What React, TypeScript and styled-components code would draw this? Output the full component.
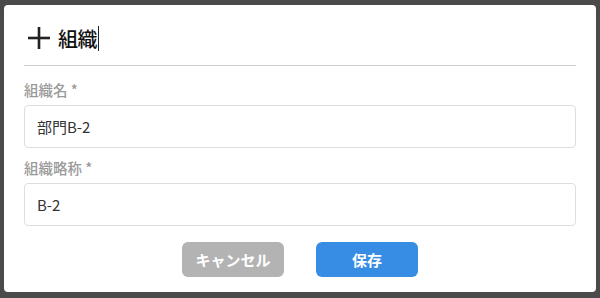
import styled, {createGlobalStyle} from 'styled-components'

const GlobalStyle = createGlobalStyle`
  html, body {
    margin: 0;
    padding: 0;
    background: #4a4a4a;
  }
  body {
    font-family: 'Noto Sans CJK JP', 'Noto Sans', sans-serif;
  }
`

const Overlay = styled.div`
  width: 600px;
  height: 298px;
  padding: 5px 4px 6px 4px;
  box-sizing: border-box;
  background: #4a4a4a;
`

const Dialog = styled.div`
  display: flex;
  flex-direction: column;
  height: 287px;
  padding: 16px 20px 0 20px;
  box-sizing: border-box;
  background: #fff;
  border-radius: 4px;
`

const Header = styled.div`
  display: flex;
  align-items: center;
  gap: 8px;
  height: 45px;
  padding: 0 0 10px 4px;
  border-bottom: 1px solid #cfcfcf;
  box-sizing: border-box;
`

const Title = styled.span`
  display: flex;
  align-items: center;
  font-size: 20px;
  font-weight: 500;
  color: #111;
  letter-spacing: -0.5px;
`

const Caret = styled.span`
  display: inline-block;
  width: 1px;
  height: 25px;
  margin-left: 1px;
  background: #222;
`

const Field = styled.div<{$top: number}>`
  display: flex;
  flex-direction: column;
  margin-top: ${(p) => p.$top}px;
`

const Label = styled.label`
  font-size: 14.5px;
  font-weight: 500;
  color: #9a9a9a;
  line-height: 18px;
  margin-bottom: 6px;
`

const Input = styled.div`
  display: flex;
  align-items: center;
  height: 43px;
  padding: 0 12px;
  box-sizing: border-box;
  border: 1px solid #dedede;
  border-radius: 4px;
  font-size: 15px;
  color: #333;
`

const Actions = styled.div`
  display: flex;
  justify-content: center;
  gap: 32px;
  margin-top: 16px;
`

const Button = styled.button<{$primary?: boolean}>`
  width: 102px;
  height: 35px;
  border: none;
  border-radius: 6px;
  font-family: 'Noto Sans CJK JP', 'Noto Sans', sans-serif;
  font-size: 15px;
  font-weight: 700;
  color: #fff;
  background: ${(p) => (p.$primary ? '#368de3' : '#b3b3b3')};
  cursor: pointer;
`

const PlusIcon = () => (
  <svg width="22" height="22" viewBox="0 0 22 22">
    <rect x="9.7" y="0" width="2.6" height="22" fill="#222" />
    <rect x="0" y="9.7" width="22" height="2.6" fill="#222" />
  </svg>
)

const App = () => {
  return (
    <>
      <GlobalStyle />
      <Overlay>
        <Dialog>
          <Header>
            <PlusIcon />
            <Title>
              組織
              <Caret />
            </Title>
          </Header>
          <Field $top={15}>
            <Label>組織名 *</Label>
            <Input>部門B-2</Input>
          </Field>
          <Field $top={11}>
            <Label>組織略称 *</Label>
            <Input>B-2</Input>
          </Field>
          <Actions>
            <Button>キャンセル</Button>
            <Button $primary>保存</Button>
          </Actions>
        </Dialog>
      </Overlay>
    </>
  )
}

export default App
